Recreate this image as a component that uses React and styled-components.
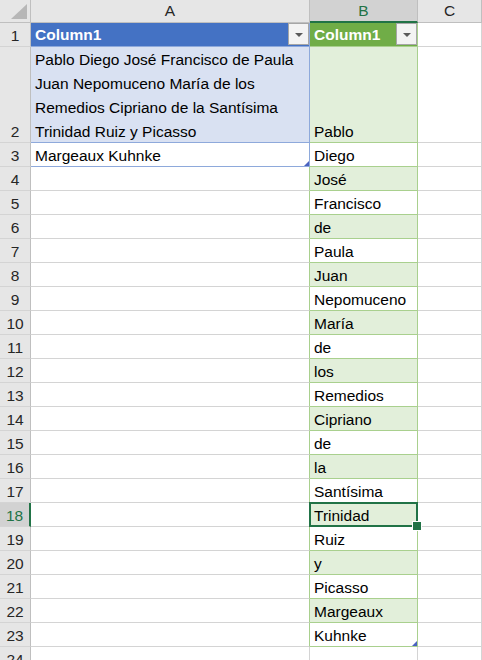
import React from 'react';
import styled, { createGlobalStyle, css } from 'styled-components';

const GRID = '#d4d4d4';
const HEAD_LINE = '#bfbfbf';
const BLUE_LINE = '#8ea9db';
const GREEN_LINE = '#a9d08e';
const EXCEL_GREEN = '#217346';

const GlobalStyle = createGlobalStyle`
  * { box-sizing: border-box; }
  html, body { margin: 0; background: #fff; overflow: hidden; }
  body {
    font-family: 'Liberation Sans', Arial, sans-serif;
    font-size: 15.5px;
    color: #000;
  }
`;

const Sheet = styled.div`
  display: grid;
  grid-template-columns: 31px 279px 108px 1fr;
  grid-template-rows: 23px 24px 96px repeat(22, 24px);
  width: 482px;
  height: 660px;
  overflow: hidden;
`;

const Corner = styled.div`
  display: flex;
  justify-content: flex-end;
  align-items: flex-end;
  padding: 0 3px 3px 0;
  background: #e6e6e6;
  border-right: 1px solid ${HEAD_LINE};
  border-bottom: 1px solid ${HEAD_LINE};
`;

const CornerMark = styled.span`
  width: 16px;
  height: 15px;
  background: #b7b7b7;
  clip-path: polygon(100% 0, 100% 100%, 0 100%);
`;

const ColHead = styled.div`
  display: flex;
  align-items: center;
  justify-content: center;
  line-height: 22px;
  background: ${p => (p.$active ? '#d2d2d2' : '#e6e6e6')};
  color: ${p => (p.$active ? EXCEL_GREEN : '#262626')};
  border-right: 1px solid ${HEAD_LINE};
  border-bottom: ${p => (p.$active ? `2px solid ${EXCEL_GREEN}` : `1px solid ${HEAD_LINE}`)};
`;

const RowHead = styled.div`
  display: flex;
  align-items: flex-end;
  justify-content: center;
  overflow: hidden;
  background: ${p => (p.$active ? '#d2d2d2' : '#e6e6e6')};
  color: ${p => (p.$active ? EXCEL_GREEN : '#262626')};
  border-right: ${p => (p.$active ? `2px solid ${EXCEL_GREEN}` : `1px solid ${HEAD_LINE}`)};
  border-bottom: 1px solid ${GRID};
`;

const Text = styled.span`
  display: block;
  line-height: 24px;
  margin-bottom: -2px;
  white-space: pre;
`;

const Cell = styled.div`
  position: relative;
  display: flex;
  align-items: flex-end;
  padding-left: 4px;
  overflow: hidden;
  background: ${p => p.$bg || '#fff'};
  border-right: 1px solid ${p => p.$right || GRID};
  border-bottom: 1px solid ${p => p.$bottom || GRID};

  ${p =>
    p.$corner &&
    css`
      &::after {
        content: '';
        position: absolute;
        right: 0;
        bottom: 0;
        width: 5px;
        height: 5px;
        background: #4a62c0;
        clip-path: polygon(100% 0, 100% 100%, 0 100%);
      }
    `}

  ${p =>
    p.$selected &&
    css`
      overflow: visible;
      z-index: 2;
      &::after {
        content: '';
        position: absolute;
        inset: -1px;
        border: 2px solid ${EXCEL_GREEN};
      }
      &::before {
        content: '';
        position: absolute;
        right: -5px;
        bottom: -5px;
        width: 8px;
        height: 8px;
        background: ${EXCEL_GREEN};
        border: 1px solid #fff;
        z-index: 1;
      }
    `}
`;

const HeaderCell = styled(Cell)`
  align-items: flex-start;
  justify-content: space-between;
  color: #fff;
  font-weight: 700;

  ${Text} {
    margin-bottom: 0;
  }
`;

const FilterButton = styled.span`
  flex: none;
  display: flex;
  align-items: center;
  justify-content: center;
  width: 21px;
  height: 22px;
  background: #f3f3f3;
  border: 1px solid #a6a6a6;

  &::after {
    content: '';
    border-left: 4px solid transparent;
    border-right: 4px solid transparent;
    border-top: 4px solid #5a5a5a;
    margin-top: 1px;
  }
`;

const nameLines = [
  'Pablo Diego José Francisco de Paula',
  'Juan Nepomuceno María de los',
  'Remedios Cipriano de la Santísima',
  'Trinidad Ruiz y Picasso',
];

const words = [
  'Pablo', 'Diego', 'José', 'Francisco', 'de', 'Paula', 'Juan', 'Nepomuceno',
  'María', 'de', 'los', 'Remedios', 'Cipriano', 'de', 'la', 'Santísima',
  'Trinidad', 'Ruiz', 'y', 'Picasso', 'Margeaux', 'Kuhnke',
];

const BLUE_BAND = '#d9e1f2';
const GREEN_BAND = '#e2efda';

const App = () => {
  const rows = [];
  for (let r = 2; r <= 24; r++) {
    const inB = r <= 23;
    const word = words[r - 2];
    let aCell;
    if (r === 2) {
      aCell = (
        <Cell $bg={BLUE_BAND} $right={BLUE_LINE} $bottom={BLUE_LINE}>
          <Text>{nameLines.join('\n')}</Text>
        </Cell>
      );
    } else if (r === 3) {
      aCell = (
        <Cell $right={BLUE_LINE} $bottom={BLUE_LINE} $corner>
          <Text>Margeaux Kuhnke</Text>
        </Cell>
      );
    } else {
      aCell = <Cell $right={inB ? GREEN_LINE : GRID} />;
    }

    rows.push(
      <React.Fragment key={r}>
        <RowHead $active={r === 18}>
          <Text>{r}</Text>
        </RowHead>
        {aCell}
        {inB ? (
          <Cell
            $bg={r % 2 === 0 ? GREEN_BAND : '#fff'}
            $right={GREEN_LINE}
            $bottom={GREEN_LINE}
            $selected={r === 18}
            $corner={r === 23}
          >
            <Text>{word}</Text>
          </Cell>
        ) : (
          <Cell />
        )}
        <Cell />
      </React.Fragment>
    );
  }

  return (
    <>
      <GlobalStyle />
      <Sheet>
        <Corner>
          <CornerMark />
        </Corner>
        <ColHead>A</ColHead>
        <ColHead $active>B</ColHead>
        <ColHead>C</ColHead>

        <RowHead>
          <Text>1</Text>
        </RowHead>
        <HeaderCell $bg="#4472c4" $right={BLUE_LINE} $bottom={BLUE_LINE}>
          <Text>Column1</Text>
          <FilterButton />
        </HeaderCell>
        <HeaderCell $bg="#70ad47" $right={GREEN_LINE} $bottom={GREEN_LINE}>
          <Text>Column1</Text>
          <FilterButton />
        </HeaderCell>
        <Cell />

        {rows}
      </Sheet>
    </>
  );
};

export default App;
